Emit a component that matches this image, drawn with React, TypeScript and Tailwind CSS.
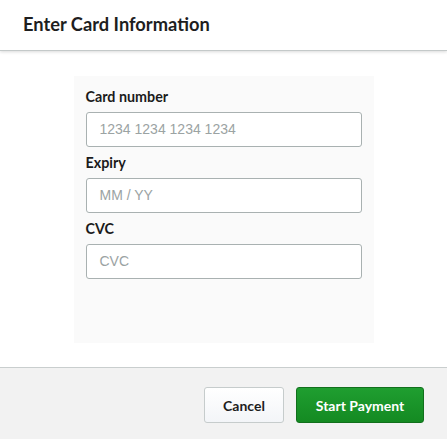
import React from "react";

export default function App() {
  const lato = { fontFamily: "Lato, 'Noto Sans', sans-serif" };
  const field = (label: string, ph: string) => (
    <div className="flex flex-col">
      <div className="text-[14.3px] font-bold text-[#1b1b1b] h-[31px] leading-[31px]" style={lato}>
        {label}
      </div>
      <div
        className="h-[35px] rounded-[3px] border border-[#a9b1b1] bg-white flex items-center pl-[13px] text-[14px] text-[#9ba3a3]"
        style={{ fontFamily: "'Liberation Sans', Arial, sans-serif" }}
      >
        {ph}
      </div>
    </div>
  );
  return (
    <div className="w-[447px] h-[439px] bg-white flex flex-col overflow-hidden" style={lato}>
      <div className="h-[51px] shrink-0 flex items-center pl-[23px] border-b border-[#c4c9c9] shadow-[0_1px_3px_rgba(0,0,0,0.15)] relative z-10">
        <span className="text-[18.3px] font-bold text-[#1e1e1e] leading-none pb-[1px]">Enter Card Information</span>
      </div>
      <div className="flex-1 flex justify-center pt-[25px]">
        <div className="w-[300px] h-[267px] bg-[#fafafa] pt-[5px] pl-[12px] pr-[12px] flex flex-col">
          {field("Card number", "1234 1234 1234 1234")}
          {field("Expiry", "MM / YY")}
          {field("CVC", "CVC")}
        </div>
      </div>
      <div className="h-[72px] shrink-0 bg-[#f2f2f2] border-t border-[#c9cece] flex items-start justify-end pt-[19px] pr-[23px] gap-[12px]">
        <button className="w-[80px] h-[36px] rounded-[3px] border border-[#c6cccc] bg-gradient-to-b from-white to-[#f3f5f8] text-[14px] font-bold text-[#1e1e1e]">
          Cancel
        </button>
        <button className="w-[128px] h-[36px] rounded-[3px] border border-[#11701c] bg-gradient-to-b from-[#1f9e30] to-[#148a22] text-[14px] font-bold text-white">
          Start Payment
        </button>
      </div>
    </div>
  );
}
